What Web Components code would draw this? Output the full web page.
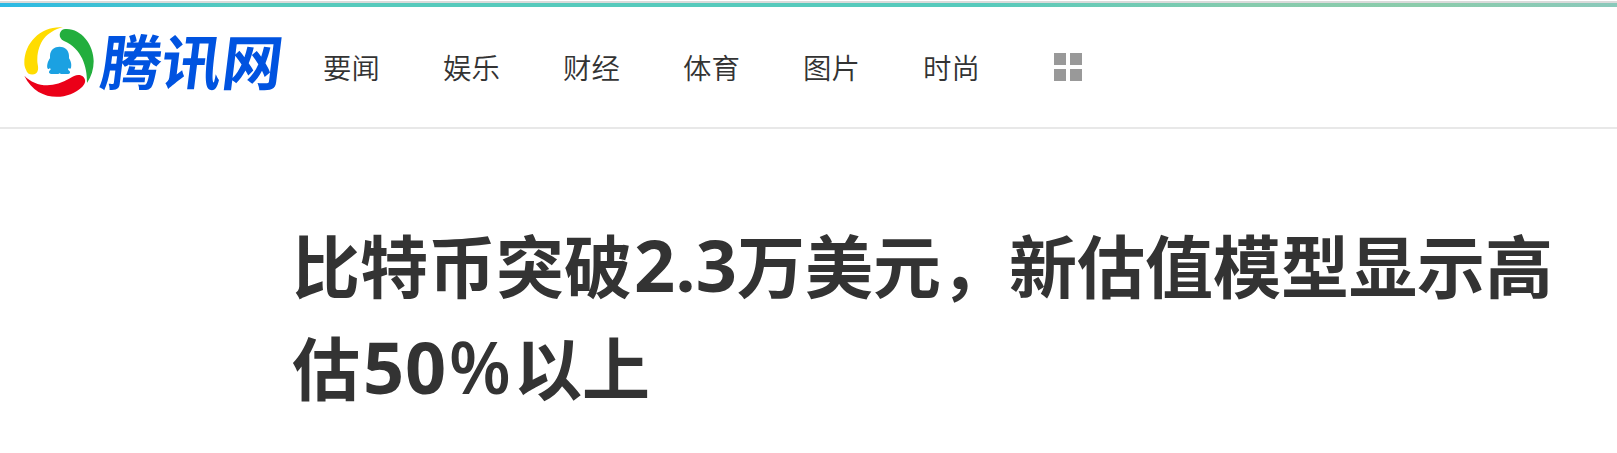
<!DOCTYPE html>
<html lang="zh-CN">
<head>
<meta charset="utf-8">
<title>腾讯网</title>
<style>
body { margin: 0; background: #fff; overflow: hidden; font-family: "Noto Sans CJK SC", sans-serif; color: #333; }
</style>
</head>
<body>
<news-page></news-page>
<script>
const define = (name, html) => customElements.define(name, class extends HTMLElement {
  constructor() {
    super();
    const t = document.createElement('template');
    t.innerHTML = html.trim().replace(/>\s*\n\s*</g, '><');
    this.attachShadow({ mode: 'open' }).append(t.content.cloneNode(true));
  }
});

define('accent-bar', `
<style>
:host { display: block; height: 5px; padding-top: 1px; }
.edge { height: 2px; background: #dadada; }
.line { height: 4px; background: linear-gradient(90deg, #2bb9e5 0, #56cabc 240px, #56cabc 980px, #86cbad 1250px, #8bccab 1420px, #8ac9bb 100%); }
</style>
<div class="edge"></div><div class="line"></div>`);

define('site-logo', `
<style>
:host { display: flex; width: 285px; height: 85px; flex: none; }
svg { display: block; width: 85px; height: 85px; flex: none; }
.word { display: block; font-size: 60px; line-height: 60px; height: 60px; margin: 9px 0 0 -2px; font-weight: 700; color: #0053e0; white-space: nowrap;
  transform-origin: 0 100%; transform: skewX(-7deg) scale(1.01, 1); }
</style>
<svg viewBox="0 0 255 255" aria-hidden="true">
<path fill="#ffdc00" d="M144 22C80 17 28 66 28 129C28 137 30 143 33 149C37 168 66 169 69 149C71 137 66 132 67 116C69 69 93 34 144 22Z"/>
<path fill="#22ae3d" d="M150 27C196 23 236 72 236 124C236 148 229 170 216 189C217 139 200 86 147 63C128 55 131 29 150 27Z"/>
<path fill="#eb0018" d="M28 167C60 200 112 207 165 175C178 165 192 161 203 169C215 179 211 192 202 200C157 244 66 246 28 167Z"/>
<path fill="#1ba1e2" d="M105 108C105 71 162 71 162 108L162 115C166 120 171 133 168 143C167 148 163 147 161 143L159 149C168 154 168 162 155 162L138 162L134 160L130 162L112 162C99 162 100 153 107 149L105 143C103 147 99 149 97 144C95 134 100 121 105 115Z"/>
</svg>
<span class="word"><slot></slot></span>`);

define('nav-item', `
<style>
:host { display: block; width: 120px; flex: none; font-size: 28.4px; line-height: 40px; color: #333; font-weight: 350; white-space: nowrap; }
</style>
<slot></slot>`);

define('grid-icon', `
<style>
:host { display: grid; grid-template-columns: 12px 12px; grid-auto-rows: 12px; gap: 4px; margin: 5px 0 0 11px; }
i { background: #999; }
</style>
<i></i><i></i><i></i><i></i>`);

define('site-header', `
<style>
:host { display: block; height: 121px; border-bottom: 2px solid #e8e8e8; }
.row { display: flex; padding: 14px 0 0 15px; }
nav { display: flex; margin: 27px 0 0 23px; }
grid-icon { margin-top: 6px; }
</style>
<div class="row">
<site-logo>腾讯网</site-logo>
<nav>
<nav-item>要闻</nav-item><nav-item>娱乐</nav-item><nav-item>财经</nav-item><nav-item>体育</nav-item><nav-item>图片</nav-item><nav-item>时尚</nav-item>
<grid-icon></grid-icon>
</nav>
</div>`);

define('article-title', `
<style>
:host { display: block; margin: 84px 0 0 292px; }
h1 { margin: 0; font-size: 68px; line-height: 102px; font-weight: 700; color: #333; white-space: nowrap; }
</style>
<h1><slot></slot></h1>`);

define('latin-run', `
<style>
:host { display: inline; font-family: "Open Sans", sans-serif; font-size: 72px; line-height: 1px; font-weight: 700; vertical-align: 1px; padding-left: 2px; }
:host([wide]) { letter-spacing: 0.7px; padding-left: 3px; }
:host([light]) { font-weight: 600; letter-spacing: 3px; }
</style>
<slot></slot>`);

define('news-page', `
<style>
:host { display: block; height: 453px; overflow: hidden; }
</style>
<accent-bar></accent-bar>
<site-header></site-header>
<article-title>比特币突破<latin-run>2.3</latin-run>万美元，新估值模型显示高<br>估<latin-run wide>50</latin-run><latin-run light>%</latin-run>以上</article-title>`);
</script>
</body>
</html>
